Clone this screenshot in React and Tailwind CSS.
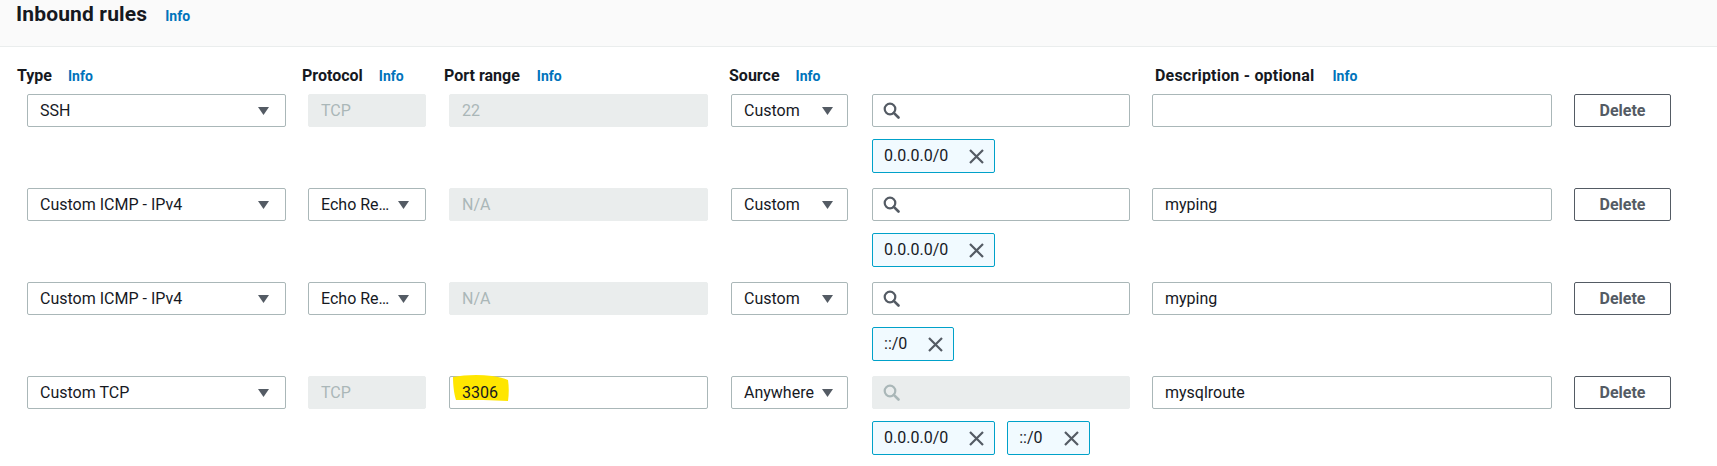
import React from "react";

const Arrow = () => (
  <svg width="11" height="8" viewBox="0 0 11 8" className="shrink-0">
    <path d="M0 0 H11 L5.5 8 Z" fill="#545b64" />
  </svg>
);

const Search = ({ color = "#545b64" }) => (
  <svg width="17" height="17" viewBox="0 0 17 17" className="shrink-0">
    <circle cx="7" cy="7" r="5.3" fill="none" stroke={color} strokeWidth="2.2" />
    <path d="M10.8 10.8 L15.5 15.5" stroke={color} strokeWidth="2.6" strokeLinecap="round" />
  </svg>
);

const XIcon = () => (
  <svg width="15" height="15" viewBox="0 0 15 15" className="shrink-0">
    <path d="M1 1 L14 14 M14 1 L1 14" stroke="#545b64" strokeWidth="2.2" />
  </svg>
);

const Select = ({ text, w, pr = "pr-[16px]" }) => (
  <div
    className={`${w} h-[33px] border border-[#aab7b8] rounded-[2px] bg-white flex items-center justify-between pl-[12px] ${pr} text-[16px] text-[#16191f] whitespace-nowrap`}
  >
    <span>{text}</span>
    <Arrow />
  </div>
);

const Disabled = ({ text, w }) => (
  <div
    className={`${w} h-[33px] border border-[#eaeded] rounded-[2px] bg-[#eaeded] flex items-center pl-[12px] text-[16px] text-[#aab7b8]`}
  >
    {text}
  </div>
);

const TextInput = ({ text, w }) => (
  <div
    className={`${w} h-[33px] border border-[#aab7b8] rounded-[2px] bg-white flex items-center pl-[12px] text-[16px] text-[#16191f]`}
  >
    {text}
  </div>
);

const Tag = ({ text }) => (
  <div className="h-[34px] border border-[#00a1c9] rounded-[2px] bg-[#f1faff] flex items-center pl-[11px] pr-[10px] text-[16px] text-[#16191f]">
    <span>{text}</span>
    <span className="ml-[21px] flex">
      <XIcon />
    </span>
  </div>
);

const SearchBox = ({ disabled }) => (
  <div
    className={`w-[258px] h-[33px] border rounded-[2px] flex items-center pl-[10px] ${
      disabled ? "bg-[#eaeded] border-[#eaeded]" : "bg-white border-[#aab7b8]"
    }`}
  >
    <Search color={disabled ? "#aab7b8" : "#545b64"} />
  </div>
);

const DeleteBtn = () => (
  <div className="w-[97px] h-[33px] border border-[#545b64] rounded-[2px] bg-white flex items-center justify-center text-[16px] font-bold text-[#545b64]">
    Delete
  </div>
);

const Info = () => (
  <span className="text-[14px] font-bold text-[#0073bb]">Info</span>
);

const Row = ({ type, protocol, port, source, tags, searchDisabled, desc }) => (
  <div className="flex items-start gap-[22px]">
    <div className="w-[259px]">
      <Select text={type} w="w-[259px]" pr="pr-[16px]" />
    </div>
    <div className="w-[119px]">{protocol}</div>
    <div className="w-[260px]">{port}</div>
    <div className="w-[119px]">
      <Select text={source} w="w-[117px]" pr="pr-[14px]" />
    </div>
    <div className="w-[258px] flex flex-col gap-[12px]">
      <SearchBox disabled={searchDisabled} />
      <div className="flex gap-[12px]">
        {tags.map((t, i) => (
          <Tag key={i} text={t} />
        ))}
      </div>
    </div>
    <div className="w-[400px]">
      <TextInput text={desc} w="w-[400px]" />
    </div>
    <div className="w-[97px]">
      <DeleteBtn />
    </div>
  </div>
);

export default function App() {
  return (
    <div className="w-[1717px] h-[466px] bg-white overflow-hidden font-['Roboto',sans-serif] text-[#16191f]">
      <div className="h-[47px] bg-[#fafafa] border-b border-[#eaeded] pl-[16px] pt-[2px] flex items-baseline">
        <h2 className="text-[21px] leading-[24px] font-bold tracking-[0.15px]">Inbound rules</h2>
        <span className="ml-[18px]">
          <Info />
        </span>
      </div>

      <div className="pl-[27px] mt-[19px]">
        <div className="flex gap-[22px] h-[20px] leading-[20px] text-[16px] font-bold">
          <div className="w-[259px]">
            <div className="-ml-[10px] flex items-baseline gap-[16px] whitespace-nowrap">
              <span>Type</span>
              <Info />
            </div>
          </div>
          <div className="w-[119px]">
            <div className="-ml-[6px] flex items-baseline gap-[16px] whitespace-nowrap">
              <span>Protocol</span>
              <Info />
            </div>
          </div>
          <div className="w-[260px]">
            <div className="-ml-[5px] flex items-baseline gap-[17px] whitespace-nowrap">
              <span>Port range</span>
              <Info />
            </div>
          </div>
          <div className="w-[119px]">
            <div className="-ml-[2px] flex items-baseline gap-[16px] whitespace-nowrap">
              <span>Source</span>
              <Info />
            </div>
          </div>
          <div className="w-[258px]"></div>
          <div className="w-[400px]">
            <div className="ml-[3px] flex items-baseline gap-[18px] whitespace-nowrap">
              <span className="tracking-[0.2px]">Description - optional</span>
              <Info />
            </div>
          </div>
        </div>

        <div className="mt-[8px] flex flex-col gap-[15px]">
          <Row
            type="SSH"
            protocol={<Disabled text="TCP" w="w-[118px]" />}
            port={<Disabled text="22" w="w-[259px]" />}
            source="Custom"
            tags={["0.0.0.0/0"]}
            desc=""
          />
          <Row
            type="Custom ICMP - IPv4"
            protocol={<Select text="Echo Re…" w="w-[118px]" pr="pr-[16px]" />}
            port={<Disabled text="N/A" w="w-[259px]" />}
            source="Custom"
            tags={["0.0.0.0/0"]}
            desc="myping"
          />
          <Row
            type="Custom ICMP - IPv4"
            protocol={<Select text="Echo Re…" w="w-[118px]" pr="pr-[16px]" />}
            port={<Disabled text="N/A" w="w-[259px]" />}
            source="Custom"
            tags={["::/0"]}
            desc="myping"
          />
          <Row
            type="Custom TCP"
            protocol={<Disabled text="TCP" w="w-[118px]" />}
            port={
              <div className="w-[259px] h-[33px] border border-[#aab7b8] rounded-[2px] bg-white flex items-center pl-[12px] text-[16px] text-[#16191f]">
                <span className="relative">
                  <svg
                    width="58"
                    height="28"
                    viewBox="0 0 58 28"
                    className="absolute left-[-10px] top-[-7px]"
                  >
                    <path
                      d="M1 3 C12 1 26 0 40 2 C47 3 52 4 56 6 C57 13 57 20 56 27 C40 26 24 26 4 26 C2 20 1 11 1 3 Z"
                      fill="#ffe600"
                    />
                  </svg>
                  <span className="relative">3306</span>
                </span>
              </div>
            }
            source="Anywhere"
            searchDisabled
            tags={["0.0.0.0/0", "::/0"]}
            desc="mysqlroute"
          />
        </div>
      </div>
    </div>
  );
}
